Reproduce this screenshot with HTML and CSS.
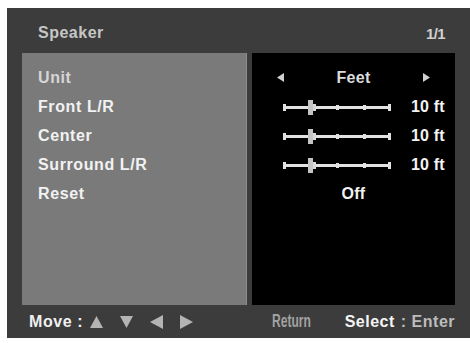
FILE: index.html
```html
<!DOCTYPE html>
<html>
<head>
<meta charset="utf-8">
<link rel="stylesheet" href="styles.css">
</head>
<body>
<div class="screen">
  <div class="header">
    <span class="title">Speaker</span>
    <span class="page">1/1</span>
  </div>
  <div class="main">
    <div class="labels">
      <div class="row dim">Unit</div>
      <div class="row">Front L/R</div>
      <div class="row">Center</div>
      <div class="row">Surround L/R</div>
      <div class="row">Reset</div>
    </div>
    <div class="values">
      <div class="row unit">
        <svg class="arr" width="7" height="9" viewBox="0 0 7 9"><polygon points="7,0 7,9 0,4.5" fill="#d0d0d0"/></svg>
        <span>Feet</span>
        <svg class="arr" width="7" height="9" viewBox="0 0 7 9"><polygon points="0,0 0,9 7,4.5" fill="#d0d0d0"/></svg>
      </div>
      <div class="row slide">
        <svg class="slider" width="108" height="16" viewBox="0 0 108 16">
          <rect x="1" y="7" width="106" height="3" fill="#e2e2e2"/>
          <rect x="0" y="5" width="3" height="7" fill="#e2e2e2"/>
          <rect x="105" y="5" width="3" height="7" fill="#e2e2e2"/>
          <rect x="53" y="6" width="3" height="5" fill="#e2e2e2"/>
          <rect x="80" y="6" width="3" height="5" fill="#e2e2e2"/>
          <rect x="25" y="1" width="5" height="15" fill="#c4c4c4"/>
          <rect x="30" y="5" width="3" height="7" fill="#d8d8d8"/>
        </svg>
        <span class="val">10 ft</span>
      </div>
      <div class="row slide">
        <svg class="slider" width="108" height="16" viewBox="0 0 108 16">
          <rect x="1" y="7" width="106" height="3" fill="#e2e2e2"/>
          <rect x="0" y="5" width="3" height="7" fill="#e2e2e2"/>
          <rect x="105" y="5" width="3" height="7" fill="#e2e2e2"/>
          <rect x="53" y="6" width="3" height="5" fill="#e2e2e2"/>
          <rect x="80" y="6" width="3" height="5" fill="#e2e2e2"/>
          <rect x="25" y="1" width="5" height="15" fill="#c4c4c4"/>
          <rect x="30" y="5" width="3" height="7" fill="#d8d8d8"/>
        </svg>
        <span class="val">10 ft</span>
      </div>
      <div class="row slide">
        <svg class="slider" width="108" height="16" viewBox="0 0 108 16">
          <rect x="1" y="7" width="106" height="3" fill="#e2e2e2"/>
          <rect x="0" y="5" width="3" height="7" fill="#e2e2e2"/>
          <rect x="105" y="5" width="3" height="7" fill="#e2e2e2"/>
          <rect x="53" y="6" width="3" height="5" fill="#e2e2e2"/>
          <rect x="80" y="6" width="3" height="5" fill="#e2e2e2"/>
          <rect x="25" y="1" width="5" height="15" fill="#c4c4c4"/>
          <rect x="30" y="5" width="3" height="7" fill="#d8d8d8"/>
        </svg>
        <span class="val">10 ft</span>
      </div>
      <div class="row off">Off</div>
    </div>
  </div>
  <div class="footer">
    <div class="move">
      <span>Move :</span>
      <svg class="tri" width="13" height="12" viewBox="0 0 13 12"><polygon points="6.5,0 13,12 0,12" fill="#b4b4b4"/></svg>
      <svg class="tri" width="13" height="12" viewBox="0 0 13 12"><polygon points="0,0 13,0 6.5,12" fill="#b4b4b4"/></svg>
      <svg class="tri" width="13" height="14" viewBox="0 0 13 14"><polygon points="13,0 13,14 0,7" fill="#b4b4b4"/></svg>
      <svg class="tri" width="13" height="14" viewBox="0 0 13 14"><polygon points="0,0 0,14 13,7" fill="#b4b4b4"/></svg>
    </div>
    <div class="actions">
      <span class="ret">Return</span>
      <span class="sel">Select</span>
      <span class="enter">: Enter</span>
    </div>
  </div>
</div>
</body>
</html>
```

FILE: styles.css
```css
html, body {
  margin: 0;
  padding: 0;
  background: #ffffff;
}
body {
  width: 470px;
  height: 343px;
  overflow: hidden;
  font-family: "Liberation Sans", Arial, sans-serif;
  font-weight: bold;
}
.screen {
  margin: 8px 0 0 7px;
  width: 463px;
  height: 330px;
  background: #3c3c3c;
  display: flex;
  flex-direction: column;
}
.header {
  height: 45px;
  display: flex;
  justify-content: space-between;
  align-items: flex-start;
  padding: 0 25px 0 31px;
}
.title {
  font-size: 16px;
  letter-spacing: 0.5px;
  color: #c6c6c6;
  line-height: 18px;
  margin-top: 16px;
}
.page {
  font-size: 15px;
  color: #cfcfcf;
  line-height: 18px;
  margin-top: 17px;
  letter-spacing: -0.6px;
}
.main {
  height: 252px;
  display: flex;
  gap: 5px;
  padding-left: 15px;
}
.labels {
  width: 225px;
  background: #7a7a7a;
  border-right: 1px solid #8c8c8c;
  padding: 10px 0 0 16px;
  box-sizing: border-box;
}
.values {
  width: 203px;
  background: #000000;
  padding-top: 10px;
  box-sizing: border-box;
}
.row {
  height: 29px;
  line-height: 29px;
  font-size: 16px;
  letter-spacing: 0.6px;
  color: #f2f2f2;
}
.row.dim {
  color: #d6d6d6;
}
.unit {
  display: flex;
  justify-content: space-between;
  align-items: center;
  padding: 0 25px 0 25px;
  color: #dcdcdc;
}
.unit span {
  letter-spacing: 0.3px;
}
.slide {
  display: flex;
  align-items: center;
  padding-left: 31px;
}
.slider {
  display: block;
}
.val {
  margin-left: 20px;
  letter-spacing: 0.2px;
  color: #f4f4f4;
}
.off {
  text-align: center;
  letter-spacing: 0.3px;
}
.footer {
  flex: 1;
  display: flex;
  justify-content: space-between;
  align-items: center;
  padding: 0 15px 0 22px;
}
.move {
  display: flex;
  align-items: center;
  font-size: 16px;
  letter-spacing: 0.6px;
  color: #f0f0f0;
}
.move span {
  margin-right: 7px;
}
.tri {
  display: block;
  margin-right: 17px;
}
.actions {
  display: flex;
  align-items: center;
  font-size: 16px;
  letter-spacing: 0.5px;
}
.ret {
  display: inline-block;
  color: #a2a2a2;
  font-size: 18px;
  letter-spacing: 0;
  transform: scaleX(0.67);
  transform-origin: left center;
  width: 40px;
  margin-right: 33px;
}
.sel {
  color: #f4f4f4;
  margin-right: 6px;
}
.enter {
  color: #bcbcbc;
}
```
